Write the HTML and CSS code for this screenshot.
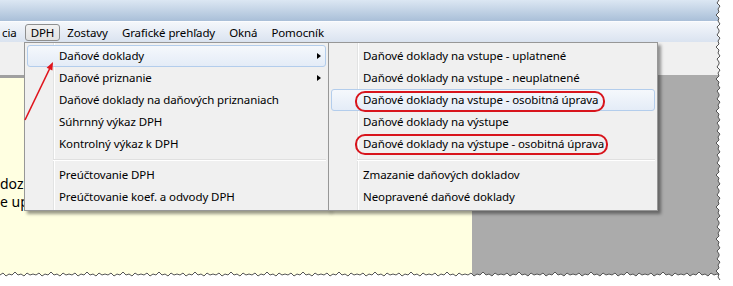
FILE: index.html
```html
<html>

<head>
    <title>DPH</title>
    <link rel="stylesheet" href="styles.css">
</head>

<body>
    <div class="shot">
        <div class="titlebar"></div>
        <div class="menubar">
            <span class="mbItem cut">cia</span>
            <span class="mbItem open">DPH</span>
            <span class="mbItem">Zostavy</span>
            <span class="mbItem">Grafické prehľady</span>
            <span class="mbItem">Okná</span>
            <span class="mbItem">Pomocník</span>
        </div>
        <div class="toolbar"></div>
        <div class="work">
            <div class="doc">
                <p>doz</p>
                <p>e up</p>
            </div>
            <div class="empty"></div>
        </div>

        <div class="menu main">
            <div class="item hot more">Daňové doklady</div>
            <div class="item more">Daňové priznanie</div>
            <div class="item">Daňové doklady na daňových priznaniach</div>
            <div class="item">Súhrnný výkaz DPH</div>
            <div class="item">Kontrolný výkaz k DPH</div>
            <div class="sep"></div>
            <div class="item">Preúčtovanie DPH</div>
            <div class="item">Preúčtovanie koef. a odvody DPH</div>
        </div>

        <div class="menu sub">
            <div class="item">Daňové doklady na vstupe - uplatnené</div>
            <div class="item">Daňové doklady na vstupe - neuplatnené</div>
            <div class="item hot">Daňové doklady na vstupe - osobitná úprava</div>
            <div class="item">Daňové doklady na výstupe</div>
            <div class="item">Daňové doklady na výstupe - osobitná úprava</div>
            <div class="sep"></div>
            <div class="item">Zmazanie daňových dokladov</div>
            <div class="item">Neopravené daňové doklady</div>
        </div>

        <div class="mark m1"></div>
        <div class="mark m2"></div>

        <svg class="arrow" width="733" height="286">
            <line x1="25" y1="120" x2="49.5" y2="69" stroke="#e0141c" stroke-width="1.6" />
            <polygon points="53,62 52.4,70.6 46.6,67.8" fill="#e0141c" />
        </svg>
    </div>

    <svg class="torn" width="733" height="286">
        <defs>
            <pattern id="jagB" x="0" y="270" width="36" height="10" patternUnits="userSpaceOnUse">
                <path d="M0 5 L3 3 L6 6 L9 4 L12 5 L15 2 L18 5 L21 4 L24 6 L27 3 L30 5 L33 4 L36 5 V10 H0 Z" fill="#fff" />
                <path d="M0 5 L3 3 L6 6 L9 4 L12 5 L15 2 L18 5 L21 4 L24 6 L27 3 L30 5 L33 4 L36 5" fill="none" stroke="#555" />
            </pattern>
            <pattern id="jagR" x="714" y="0" width="10" height="32" patternUnits="userSpaceOnUse">
                <path d="M5 0 L3 3 L6 6 L4 9 L5 12 L2 15 L5 18 L4 21 L6 24 L3 27 L5 30 L5 32 H10 V0 Z" fill="#fff" />
                <path d="M5 0 L3 3 L6 6 L4 9 L5 12 L2 15 L5 18 L4 21 L6 24 L3 27 L5 30 L5 32" fill="none" stroke="#555" />
            </pattern>
        </defs>
        <rect x="0" y="270" width="724" height="10" fill="url(#jagB)" />
        <rect x="0" y="280" width="733" height="6" fill="#fff" />
        <rect x="714" y="0" width="10" height="280" fill="url(#jagR)" />
        <rect x="724" y="0" width="9" height="286" fill="#fff" />
    </svg>
</body>

</html>
```

FILE: styles.css
```css
body {
    margin: 0;
    background: #fff;
    font-family: "Noto Sans", "Open Sans", sans-serif;
    font-size: 11.5px;
    letter-spacing: -0.1px;
    color: #000;
}

.shot {
    position: relative;
    width: 724px;
    height: 280px;
    overflow: hidden;
    display: flex;
    flex-direction: column;
    background: #ababab;
}

.titlebar {
    height: 21px;
    background: linear-gradient(#dce7f3, #a9bfd8);
}

.menubar {
    height: 20px;
    border-top: 1px solid #fbfcfe;
    background: linear-gradient(#f4f7fb, #dae3f0);
    display: flex;
    align-items: flex-end;
}

.mbItem {
    box-sizing: border-box;
    height: 17px;
    line-height: 15px;
    padding: 0 6px;
    margin-bottom: 1px;
    border: 1px solid transparent;
    border-radius: 3px;
    white-space: nowrap;
}

.mbItem.cut {
    padding-left: 1px;
    padding-right: 7px;
}

.mbItem.open {
    padding: 0 5px;
    border-color: #8e8f8f;
    background: linear-gradient(#f2f2f2, #e2e2e2);
}

.toolbar {
    height: 33px;
    background: #f0f0f0;
}

.work {
    flex: 1;
    display: flex;
}

.doc {
    width: 472px;
    background: #ffffe1;
    border-top: 3px solid #a0a0a0;
    padding-top: 97px;
    font-size: 14px;
    letter-spacing: 0;
}

.doc p {
    margin: 0;
    line-height: 18px;
}

.empty {
    flex: 1;
}

.menu {
    position: absolute;
    top: 42px;
    box-sizing: border-box;
    padding: 2px;
    border: 1px solid #979797;
    background-color: #f0f0f0;
    background-image: linear-gradient(to right, transparent 28px, #e2e3e3 28px, #e2e3e3 29px, #fff 29px, #fff 30px, transparent 30px);
    box-shadow: 3px 3px 3px rgba(0, 0, 0, 0.4);
}

.main {
    left: 24px;
    width: 305px;
}

.sub {
    left: 328px;
    width: 330px;
}

.item {
    position: relative;
    box-sizing: border-box;
    height: 22px;
    line-height: 20px;
    padding-left: 31px;
    border: 1px solid transparent;
    border-radius: 3px;
    white-space: nowrap;
}

.item.hot {
    border-color: #b3cdec;
    background: linear-gradient(#f5f8fc, #e4ecf7);
}

.item.more::after {
    content: "";
    position: absolute;
    right: 4px;
    top: 7px;
    border-left: 4px solid #000;
    border-top: 3.5px solid transparent;
    border-bottom: 3.5px solid transparent;
}

.sep {
    height: 9px;
    margin-left: 26px;
    position: relative;
}

.sep::before {
    content: "";
    position: absolute;
    left: 0;
    right: 0;
    top: 4px;
    border-top: 1px solid #e0e0e0;
    border-bottom: 1px solid #fff;
}

.mark {
    position: absolute;
    border: 2px solid #d8141c;
    border-radius: 10px;
}

.m1 {
    left: 355px;
    top: 91px;
    width: 246px;
    height: 17px;
}

.m2 {
    left: 355px;
    top: 134px;
    width: 249px;
    height: 17px;
}

.arrow {
    position: absolute;
    left: 0;
    top: 0;
}

.torn {
    position: absolute;
    left: 0;
    top: 0;
}
```
